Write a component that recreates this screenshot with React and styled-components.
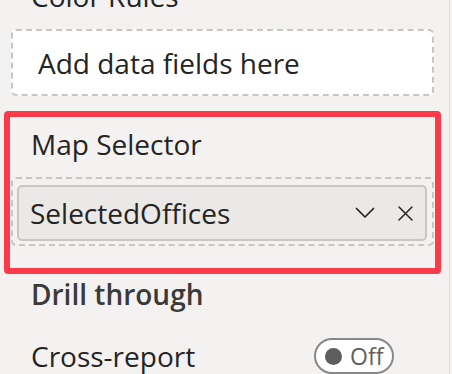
import React from "react";
import styled, { createGlobalStyle } from "styled-components";

const Global = createGlobalStyle`
  html, body { margin: 0; padding: 0; background: #f3f2f1; }
  body { width: 452px; height: 374px; overflow: hidden; }
  #root { height: 374px; }
`;

const Shell = styled.div`
  display: flex;
  width: 452px;
  height: 374px;
  overflow: hidden;
  background: #f3f2f1;
  font-family: "Open Sans", "Noto Sans", sans-serif;
  color: #252423;
`;

const Pane = styled.div`
  flex: 1;
  display: flex;
  flex-direction: column;
`;

const ScrollEdge = styled.div`
  width: 2px;
  border-left: 1px solid #e1dfdd;
  background: #f3f2f1;
`;

const Label = styled.div`
  font-size: 28px;
  line-height: 36px;
  height: 36px;
  padding-left: 31px;
  font-weight: ${(p) => (p.$bold ? 600 : 400)};
  color: ${(p) => (p.$bold ? "#3b3a39" : "#252423")};
  margin-top: ${(p) => p.$mt}px;
  white-space: nowrap;
`;

const DropZone = styled.div`
  box-sizing: border-box;
  margin: 15px 0 0 11px;
  width: 423px;
  height: 69px;
  border: 2px dashed #c8c6c4;
  border-radius: 5px;
  background: ${(p) => (p.$filled ? "transparent" : "#ffffff")};
  display: flex;
  align-items: ${(p) => (p.$filled ? "stretch" : "center")};
  padding: ${(p) => (p.$filled ? "6px 5px 3px 4px" : "0 0 0 25px")};
  font-size: 28px;
`;

const Highlighted = styled.div`
  position: relative;
  display: flex;
  flex-direction: column;
  margin-top: 30px;
  &::after {
    content: "";
    position: absolute;
    left: 4px;
    right: 8px;
    top: -15px;
    bottom: -28px;
    border: 6px solid #fd3a4a;
    border-radius: 4px;
    pointer-events: none;
  }
`;

const FieldPill = styled.div`
  flex: 1;
  box-sizing: border-box;
  display: flex;
  align-items: center;
  background: #ebe9e7;
  border: 2px solid #c8c6c4;
  border-radius: 5px;
  padding: 0 12px 0 11px;
  font-size: 28px;
`;

const PillText = styled.span`
  flex: 1;
  white-space: nowrap;
`;

const PillIcons = styled.div`
  display: flex;
  align-items: center;
  gap: 23px;
  color: #252423;
`;

const Row = styled.div`
  display: flex;
  align-items: center;
  justify-content: space-between;
  padding-right: 55px;
  margin-top: 26px;
`;

const Toggle = styled.div`
  box-sizing: border-box;
  width: 80px;
  height: 36px;
  border: 2px solid #8a8886;
  border-radius: 18px;
  background: #ffffff;
  display: flex;
  align-items: center;
  padding-left: 9px;
  gap: 8px;
`;

const Knob = styled.span`
  display: block;
  flex: 0 0 17px;
  width: 17px;
  height: 17px;
  border-radius: 50%;
  background: #605e5c;
`;

const ToggleText = styled.span`
  font-size: 23px;
  color: #605e5c;
  line-height: 1;
`;

const Chevron = () => (
  <svg width="20" height="12" viewBox="0 0 20 12" fill="none">
    <path d="M1.5 1.5 L10 10 L18.5 1.5" stroke="#252423" strokeWidth="1.7" strokeLinecap="round" strokeLinejoin="round" />
  </svg>
);

const Cross = () => (
  <svg width="15" height="15" viewBox="0 0 15 15" fill="none">
    <path d="M1 1 L14 14 M14 1 L1 14" stroke="#252423" strokeWidth="1.5" strokeLinecap="round" />
  </svg>
);

export default function App() {
  return (
    <>
      <Global />
      <Shell>
        <Pane>
          <Label $mt={-22}>Color Rules</Label>
          <DropZone>Add data fields here</DropZone>
          <Highlighted>
            <Label $mt={0}>Map Selector</Label>
            <DropZone $filled>
              <FieldPill>
                <PillText>SelectedOffices</PillText>
                <PillIcons>
                  <Chevron />
                  <Cross />
                </PillIcons>
              </FieldPill>
            </DropZone>
          </Highlighted>
          <Label $bold $mt={30}>Drill through</Label>
          <Row>
            <Label $mt={0}>Cross-report</Label>
            <Toggle>
              <Knob />
              <ToggleText>Off</ToggleText>
            </Toggle>
          </Row>
        </Pane>
        <ScrollEdge />
      </Shell>
    </>
  );
}
